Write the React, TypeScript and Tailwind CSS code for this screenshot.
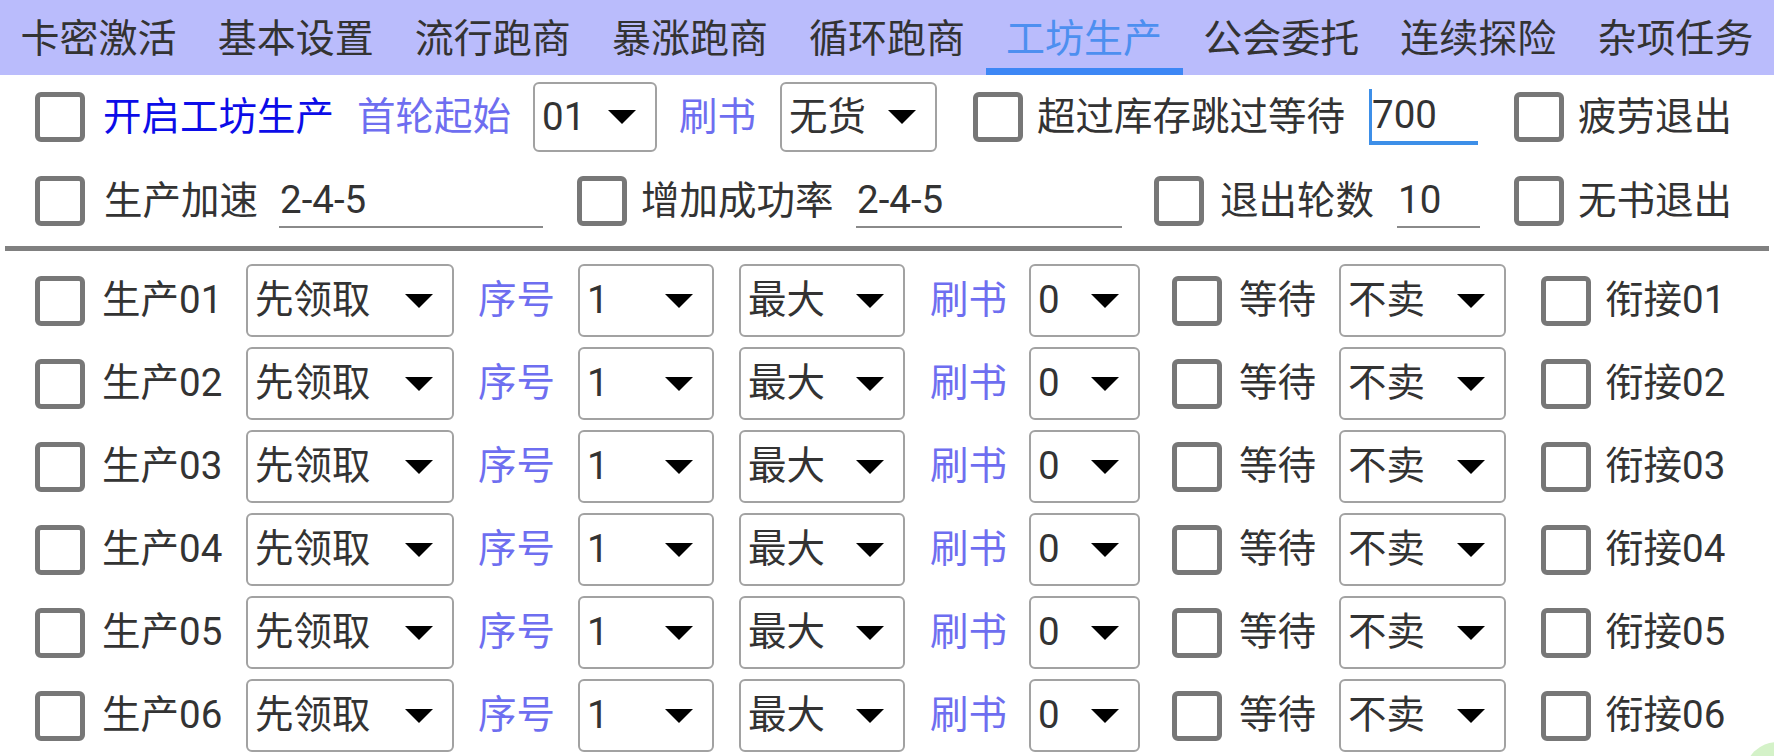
import React from "react";

const tabs = ["卡密激活", "基本设置", "流行跑商", "暴涨跑商", "循环跑商", "工坊生产", "公会委托", "连续探险", "杂项任务"];

function Checkbox({ className = "" }: { className?: string }) {
  return <div className={`h-[50px] w-[50px] shrink-0 rounded-[6px] border-[5px] border-[#777777] bg-white ${className}`} />;
}

function Caret() {
  return (
    <svg width="28" height="14" viewBox="0 0 28 14" className="shrink-0">
      <polygon points="0,0 28,0 14,14" fill="#000" />
    </svg>
  );
}

function Select({ value, className = "" }: { value: string; className?: string }) {
  return (
    <div
      className={`flex shrink-0 items-center justify-between rounded-[6px] border-2 border-[#a2a2a2] bg-white pl-[7px] pr-[19px] ${className}`}
    >
      <span className="leading-none">{value}</span>
      <Caret />
    </div>
  );
}

function Label({ text, className = "" }: { text: string; className?: string }) {
  return <span className={`shrink-0 whitespace-nowrap leading-none ${className}`}>{text}</span>;
}

function Field({ value, className = "" }: { value: string; className?: string }) {
  return (
    <div className={`flex h-[54px] shrink-0 items-center border-b-2 border-[#8a8a8a] pl-[1px] ${className}`}>
      <span className="leading-none">{value}</span>
    </div>
  );
}

const rows = ["01", "02", "03", "04", "05", "06"];

export default function App() {
  return (
    <div className="relative h-[756px] w-[1774px] overflow-hidden bg-white font-['Roboto','Noto_Sans_CJK_SC',sans-serif] text-[38.5px] text-[#333333]">
      {/* tab bar */}
      <div className="flex h-[75px] bg-[#babcfc]">
        {tabs.map((t) => {
          const active = t === "工坊生产";
          return (
            <div key={t} className="relative flex flex-1 items-center justify-center pt-[3px]">
              <span className={`text-[39px] leading-none ${active ? "text-[#4d8ff0]" : "text-[#333333]"}`}>{t}</span>
              {active && <div className="absolute bottom-0 left-0 right-0 h-[7px] bg-[#3d87f5]" />}
            </div>
          );
        })}
      </div>

      {/* row 1 */}
      <div className="flex h-[84px] items-center pl-[35px]">
        <Checkbox />
        <Label text="开启工坊生产" className="ml-[18px] w-[230px] text-[#0c0ce8]" />
        <Label text="首轮起始" className="ml-[24px] w-[152px] text-[#6e6ef0]" />
        <Select value="01" className="ml-[24px] h-[70px] w-[124px]" />
        <Label text="刷书" className="ml-[22px] w-[77px] text-[#6e6ef0]" />
        <Select value="无货" className="ml-[24px] h-[70px] w-[157px]" />
        <Checkbox className="ml-[36px]" />
        <Label text="超过库存跳过等待" className="ml-[14px] w-[310px]" />
        <div className="ml-[22px] flex h-[56px] w-[109px] shrink-0 items-center border-b-4 border-[#3d8fe8]">
          <span className="flex h-full items-center border-l-[3px] border-[#3d8fe8] leading-none">700</span>
        </div>
        <Checkbox className="ml-[36px]" />
        <Label text="疲劳退出" className="ml-[14px]" />
      </div>

      {/* row 2 */}
      <div className="flex h-[84px] items-center pl-[35px]">
        <Checkbox />
        <Label text="生产加速" className="ml-[19px] w-[152px]" />
        <Field value="2-4-5" className="ml-[23px] w-[264px]" />
        <Checkbox className="ml-[34px]" />
        <Label text="增加成功率" className="ml-[14px] w-[190px]" />
        <Field value="2-4-5" className="ml-[25px] w-[266px]" />
        <Checkbox className="ml-[32px]" />
        <Label text="退出轮数" className="ml-[16px] w-[152px]" />
        <Field value="10" className="ml-[25px] w-[83px]" />
        <Checkbox className="ml-[34px]" />
        <Label text="无书退出" className="ml-[14px]" />
      </div>

      {/* separator */}
      <div className="mx-[5px] mt-[3px] h-[5px] bg-[#808080]" />

      {/* production rows */}
      <div className="mt-[8px] flex flex-col">
        {rows.map((n) => (
          <div key={n} className="flex h-[83px] items-center pl-[35px]">
            <Checkbox />
            <Label text={`生产${n}`} className="ml-[17px] w-[120px]" />
            <Select value="先领取" className="ml-[24px] h-[73px] w-[208px]" />
            <Label text="序号" className="ml-[24px] w-[76px] text-[#6e6ef0]" />
            <Select value="1" className="ml-[24px] h-[73px] w-[136px]" />
            <Select value="最大" className="ml-[25px] h-[73px] w-[166px]" />
            <Label text="刷书" className="ml-[25px] w-[76px] text-[#6e6ef0]" />
            <Select value="0" className="ml-[23px] h-[73px] w-[111px]" />
            <Checkbox className="ml-[32px]" />
            <Label text="等待" className="ml-[17px] w-[76px]" />
            <Select value="不卖" className="ml-[24px] h-[73px] w-[167px]" />
            <Checkbox className="ml-[35px]" />
            <Label text={`衔接${n}`} className="ml-[14px]" />
          </div>
        ))}
      </div>

      {/* floating button peeking in at the corner */}
      <div className="absolute left-[1745px] top-[742px] h-[64px] w-[64px] rounded-full bg-[#d4f2c8]" />
    </div>
  );
}
